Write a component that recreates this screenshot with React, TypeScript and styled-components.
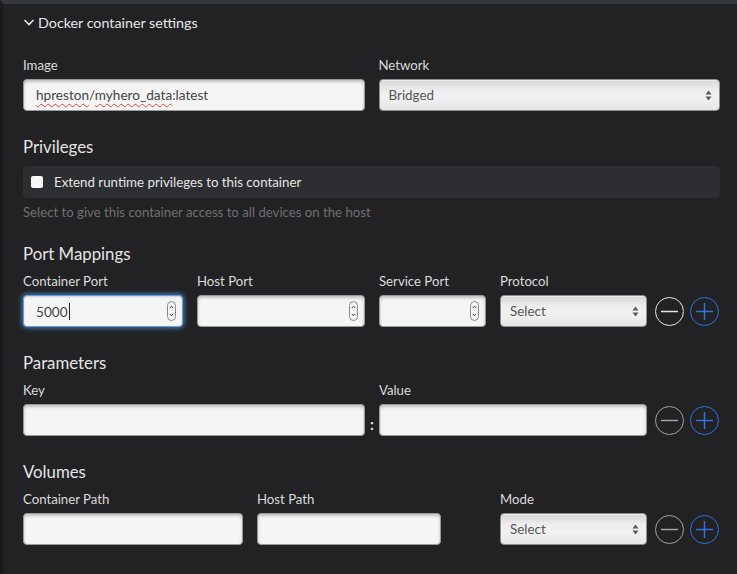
import * as React from 'react';
import styled, { createGlobalStyle } from 'styled-components';

const GlobalStyle = createGlobalStyle`
  html, body {
    margin: 0;
    padding: 0;
    background: #222224;
  }
  * {
    box-sizing: border-box;
  }
`;

const Page = styled.div`
  min-height: 100vh;
  background: #222224;
  border-top: 4px solid #34373b;
  border-left: 3px solid #1a1a1c;
  padding: 8px 17px 20px 20px;
  font-family: Lato, 'Liberation Sans', sans-serif;
  color: #dcdcdc;
`;

const Toggle = styled.div`
  display: flex;
  align-items: center;
  gap: 3px;
  height: 20px;
  font-size: 14.3px;
  color: #e6e6e6;
`;

const Section = styled.section<{ $top?: number }>`
  margin-top: ${(p) => p.$top ?? 24}px;
`;

const Heading = styled.h3<{ $gap?: number }>`
  margin: 0 0 ${(p) => p.$gap ?? 5}px;
  font-size: 16.8px;
  line-height: 24px;
  font-weight: 400;
  color: #e4e4e4;
`;

const Grid = styled.div<{ $cols: string; $gap?: number }>`
  display: grid;
  grid-template-columns: ${(p) => p.$cols};
  column-gap: ${(p) => p.$gap ?? 14}px;
  row-gap: 4px;
  align-items: center;
`;

const Label = styled.label<{ $col?: number }>`
  grid-column: ${(p) => p.$col ?? 'auto'};
  font-size: 13.2px;
  line-height: 20px;
  color: #dadada;
`;

const Box = styled.div<{ $focus?: boolean; $col?: number }>`
  grid-column: ${(p) => p.$col ?? 'auto'};
  height: 32px;
  display: flex;
  align-items: center;
  padding: 0 6px 0 12px;
  border-radius: 4px;
  border: 1px solid ${(p) => (p.$focus ? '#5d9de0' : '#9a9a9a')};
  background: #f5f5f5;
  box-shadow: ${(p) =>
    p.$focus
      ? 'inset 0 1px 2px rgba(0,0,0,0.15), 0 0 5px 1px rgba(90,160,235,0.75)'
      : 'inset 0 2px 3px rgba(0,0,0,0.22)'};
  font-size: 13.6px;
  color: #444;
`;

const Value = styled.span`
  flex: 1;
  white-space: nowrap;
`;

const Misspelled = styled.span`
  text-decoration: underline wavy #e0443e;
  text-decoration-thickness: 1px;
  text-underline-offset: 3px;
`;

const Caret = styled.span`
  display: inline-block;
  width: 1px;
  height: 17px;
  margin-left: 1px;
  background: #222;
  vertical-align: -3px;
`;

const Select = styled.div<{ $col?: number }>`
  grid-column: ${(p) => p.$col ?? 'auto'};
  height: 32px;
  display: flex;
  align-items: center;
  justify-content: space-between;
  padding: 0 7px 0 9px;
  border-radius: 4px;
  border: 1px solid #8e8e8e;
  background: linear-gradient(to bottom, #d6d6d6 0%, #eeeeee 35%, #f1f1f1 60%, #e6e6e6 100%);
  box-shadow: inset 0 1px 1px rgba(255, 255, 255, 0.6);
  font-size: 13.4px;
  color: #555;
`;

const Spinner = styled.span`
  width: 9px;
  height: 20px;
  border: 1px solid #8a8a8a;
  border-radius: 5px;
  display: flex;
  align-items: center;
  justify-content: center;
`;

const CheckRow = styled.div`
  display: flex;
  align-items: center;
  gap: 11px;
  height: 32px;
  padding: 0 8px;
  border-radius: 4px;
  background: #2c2e31;
  font-size: 13.3px;
  color: #e4e4e4;
`;

const CheckBox = styled.span`
  width: 12px;
  height: 12px;
  border-radius: 2px;
  background: #f7f7f7;
`;

const Help = styled.div`
  margin-top: 4px;
  font-size: 13.2px;
  line-height: 20px;
  color: #6e6e70;
`;

const Colon = styled.span`
  text-align: center;
  font-size: 15px;
  font-weight: 700;
  color: #e0e0e0;
  padding-top: 8px;
`;

const Actions = styled.div`
  display: flex;
  gap: 6px;
  margin-left: -6px;
`;

const toneColor = { blue: '#2f72e0', light: '#e4e4e4', dim: '#a2a2a2' };

const Circle = styled.button<{ $tone: 'light' | 'dim' | 'blue' }>`
  width: 29px;
  height: 29px;
  padding: 0;
  border-radius: 50%;
  background: transparent;
  border: 1.5px solid ${(p) => toneColor[p.$tone]};
  display: flex;
  align-items: center;
  justify-content: center;
  color: ${(p) => toneColor[p.$tone]};
`;

function Chevron() {
  return (
    <svg width="12" height="12" viewBox="0 0 12 12">
      <path d="M1.5 4l4.5 4.5 4.5-4.5" fill="none" stroke="#e6e6e6" strokeWidth="1.6" />
    </svg>
  );
}

function SelectArrows() {
  return (
    <svg width="7" height="11" viewBox="0 0 7 11">
      <path d="M3.5 0.5L6.5 4.5H0.5Z M3.5 10.5L6.5 6.5H0.5Z" fill="#5a5a5a" />
    </svg>
  );
}

function NumberSpinner() {
  return (
    <Spinner>
      <svg width="5" height="14" viewBox="0 0 5 14">
        <path d="M0.8 4L2.5 2.2L4.2 4 M0.8 10L2.5 11.8L4.2 10" fill="none" stroke="#333" strokeWidth="1" />
      </svg>
    </Spinner>
  );
}

function RowActions({ minus }: { minus: 'light' | 'dim' }) {
  return (
    <Actions>
      <Circle $tone={minus} aria-label="remove">
        <svg width="19" height="19" viewBox="0 0 19 19">
          <path d="M1 9.5H18" stroke="currentColor" strokeWidth="1.5" />
        </svg>
      </Circle>
      <Circle $tone="blue" aria-label="add">
        <svg width="19" height="19" viewBox="0 0 19 19">
          <path d="M1 9.5H18 M9.5 1V18" stroke="currentColor" strokeWidth="1.5" />
        </svg>
      </Circle>
    </Actions>
  );
}

export default function App() {
  return (
    <>
      <GlobalStyle />
      <Page>
        <Toggle>
          <Chevron />
          Docker container settings
        </Toggle>

        <Section $top={23}>
          <Grid $cols="1fr 1fr">
            <Label>Image</Label>
            <Label>Network</Label>
            <Box>
              <Value>
                <Misspelled>hpreston</Misspelled>/<Misspelled>myhero_data</Misspelled>:latest
              </Value>
            </Box>
            <Select>
              <span>Bridged</span>
              <SelectArrows />
            </Select>
          </Grid>
        </Section>

        <Section>
          <Heading $gap={7}>Privileges</Heading>
          <CheckRow>
            <CheckBox />
            Extend runtime privileges to this container
          </CheckRow>
          <Help>Select to give this container access to all devices on the host</Help>
        </Section>

        <Section $top={20}>
          <Heading>Port Mappings</Heading>
          <Grid $cols="160px 168px 107px 147px 1fr">
            <Label>Container Port</Label>
            <Label>Host Port</Label>
            <Label>Service Port</Label>
            <Label>Protocol</Label>
            <span />
            <Box $focus>
              <Value>
                5000
                <Caret />
              </Value>
              <NumberSpinner />
            </Box>
            <Box>
              <Value />
              <NumberSpinner />
            </Box>
            <Box>
              <Value />
              <NumberSpinner />
            </Box>
            <Select>
              <span>Select</span>
              <SelectArrows />
            </Select>
            <RowActions minus="light" />
          </Grid>
        </Section>

        <Section>
          <Heading>Parameters</Heading>
          <Grid $cols="342px 14px 268px 14px auto" $gap={0}>
            <Label $col={1}>Key</Label>
            <Label $col={3}>Value</Label>
            <Box $col={1} />
            <Colon>:</Colon>
            <Box $col={3} />
            <span />
            <RowActions minus="dim" />
          </Grid>
        </Section>

        <Section>
          <Heading>Volumes</Heading>
          <Grid $cols="220px 184px 31px 147px 1fr">
            <Label $col={1}>Container Path</Label>
            <Label $col={2}>Host Path</Label>
            <Label $col={4}>Mode</Label>
            <Box $col={1} />
            <Box $col={2} />
            <Select $col={4}>
              <span>Select</span>
              <SelectArrows />
            </Select>
            <RowActions minus="dim" />
          </Grid>
        </Section>
      </Page>
    </>
  );
}
